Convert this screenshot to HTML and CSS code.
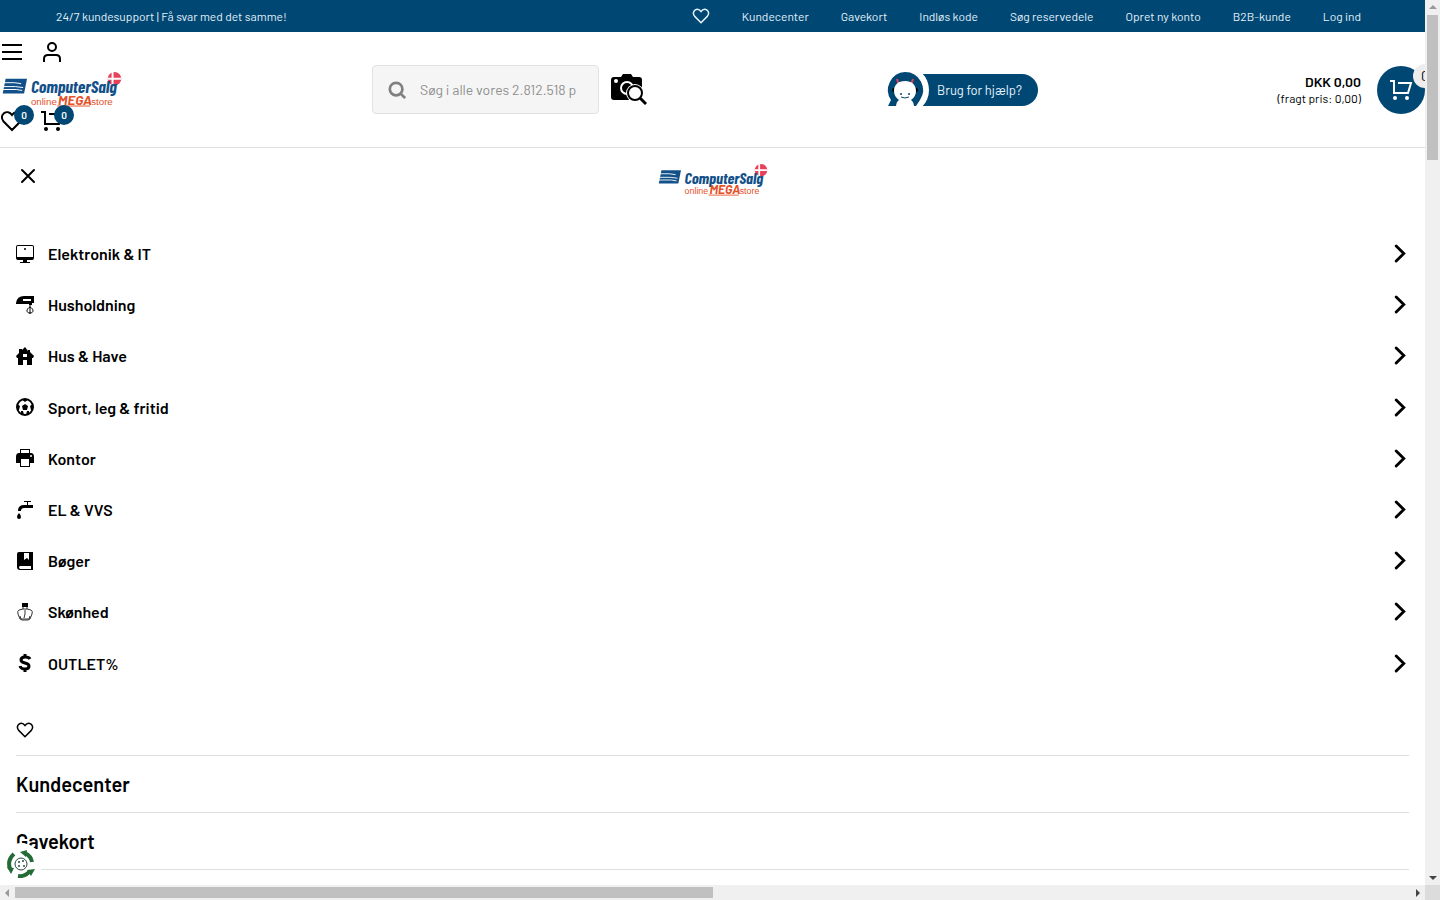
FILE: index.html
```
<!DOCTYPE html>
<html lang="da">
<head>
    <meta charset="UTF-8">
    <meta name="viewport" content="width=device-width, initial-scale=1.0">
    <title>ComputerSalg</title>
    <link rel="stylesheet" href="styles.css">
</head>
<body>
    <svg class="sprite" aria-hidden="true">
        <symbol id="logo" viewBox="0 0 122 36">
            <path d="M3 7h22l-3 15H0z" fill="#12508a"/>
            <path d="M0 11h12l7 1M0 15h13l8 1M0 18h14l6 1" fill="none" stroke="#fff"/>
            <circle cx="115" cy="7" r="7" fill="#e8415a"/>
            <path d="M113 0v14M108 7h14" stroke="#fff" stroke-width="2"/>
            <text x="29" y="22" class="logo-name">ComputerSalg</text>
            <text x="29" y="34" class="logo-sub">online</text>
            <text x="57" y="34" class="logo-mega">MEGA</text>
            <text x="91" y="34" class="logo-sub">store</text>
            <path d="M56 35h34" stroke="#e5522b"/>
        </symbol>
        <symbol id="heart" viewBox="0 0 24 24">
            <path d="M12 21 3.600 12.500C1 9.500 1.500 6 4 4.200 6.500 2.500 9.800 3 12 6c2.200-3 5.500-3.500 8-1.800 2.500 1.800 3 5.300.4 8.300z" fill="none" stroke="currentColor" stroke-width="2"/>
        </symbol>
        <symbol id="cart" viewBox="0 0 24 24">
            <path d="M1 3h4v12h14l3-10H9" fill="none" stroke="currentColor" stroke-width="2"/>
            <circle cx="6" cy="20" r="2" fill="currentColor"/>
            <circle cx="18" cy="20" r="2" fill="currentColor"/>
        </symbol>
        <symbol id="chevron" viewBox="0 0 12 20">
            <path d="m2 2 8 8-8 8" fill="none" stroke="currentColor" stroke-width="3" stroke-linecap="round"/>
        </symbol>
    </svg>

    <div class="window">
        <div class="page">
            <div class="topbar">
                <span>24/7 kundesupport | Få svar med det samme!</span>
                <nav class="topbar-nav">
                    <a href="#" aria-label="Favoritter"><svg class="icon-small"><use href="#heart"/></svg></a>
                    <a href="#">Kundecenter</a>
                    <a href="#">Gavekort</a>
                    <a href="#">Indløs kode</a>
                    <a href="#">Søg reservedele</a>
                    <a href="#">Opret ny konto</a>
                    <a href="#">B2B-kunde</a>
                    <a href="#">Log ind</a>
                </nav>
            </div>

            <header class="header">
                <div class="header-left">
                    <div class="icon-row">
                        <button aria-label="Menu">
                            <svg class="icon" viewBox="0 0 24 24"><path d="M2 5h20M2 12h20M2 19h20" stroke="currentColor" stroke-width="2"/></svg>
                        </button>
                        <button aria-label="Min konto">
                            <svg class="icon" viewBox="0 0 24 24" fill="none" stroke="currentColor" stroke-width="2"><circle cx="12" cy="7" r="4"/><path d="M4 22v-3c0-3 1-4 4-4h8c3 0 4 1 4 4v3"/></svg>
                        </button>
                    </div>
                    <a class="logo" href="#" aria-label="ComputerSalg"><svg><use href="#logo"/></svg></a>
                    <div class="icon-row icon-row-low">
                        <button aria-label="Favoritter"><svg class="icon"><use href="#heart"/></svg><span class="badge">0</span></button>
                        <button aria-label="Kurv"><svg class="icon"><use href="#cart"/></svg><span class="badge">0</span></button>
                    </div>
                </div>

                <form class="search">
                    <label class="search-box">
                        <svg viewBox="0 0 20 20" fill="none" stroke="currentColor" stroke-width="3"><circle cx="9" cy="9" r="7"/><path d="m14 14 5 5"/></svg>
                        <input type="text" aria-label="Søg" placeholder="Søg i alle vores 2.812.518 p">
                    </label>
                    <button type="button" class="camera" aria-label="Billedsøgning">
                        <svg viewBox="0 0 36 32">
                            <path d="M3 3h7l2-3h8l2 3h6q3 0 3 3v18q0 2-2 2H3q-3 0-3-3V6q0-3 3-3z"/>
                            <circle cx="5" cy="7" r="2" fill="#fff"/>
                            <circle cx="16" cy="14" r="6" fill="none" stroke="#fff" stroke-width="2"/>
                            <circle cx="24" cy="19" r="9" fill="#fff"/>
                            <circle cx="24" cy="19" r="7" fill="#fff" stroke="#000" stroke-width="2"/>
                            <path d="m29 24 6 6" stroke="#000" stroke-width="3"/>
                        </svg>
                    </button>
                </form>

                <div class="header-right">
                    <a class="help" href="#">
                        <svg class="mascot" viewBox="0 0 42 42">
                            <circle cx="18" cy="21" r="24" fill="#fff"/>
                            <path d="M18 3a18 18 0 0 1 15 28l-4 6H1l3-6A18 18 0 0 1 18 3z" fill="#004773"/>
                            <path d="m10 10 2 6M26 10l-2 6" stroke="#e8415a" stroke-width="2"/>
                            <circle cx="7" cy="21" r="2"/><circle cx="29" cy="21" r="2"/>
                            <path d="M18 12c7 0 11 4 11 10 0 4-2 7-5 9q3 2 3 7H9q0-5 3-7c-3-2-5-5-5-9 0-6 4-10 11-10z" fill="#fff"/>
                            <circle cx="14" cy="25" r="1" fill="#004773"/><circle cx="22" cy="25" r="1" fill="#004773"/>
                            <path d="M14 28q4 2 8 0" fill="none" stroke="#004773"/>
                        </svg>
                        <span>Brug for hjælp?</span>
                    </a>
                    <div class="total">
                        <strong>DKK 0,00</strong>
                        <span>(fragt pris: 0,00)</span>
                    </div>
                    <a class="basket" href="#" aria-label="Kurv"><svg class="icon"><use href="#cart"/></svg><span class="basket-count">0</span></a>
                </div>
            </header>

            <div class="menu-head">
                <button class="close" aria-label="Luk">
                    <svg class="icon" viewBox="0 0 24 24"><path d="m6 6 12 12M18 6 6 18" stroke="currentColor" stroke-width="2"/></svg>
                </button>
                <a class="logo logo-small" href="#" aria-label="ComputerSalg"><svg><use href="#logo"/></svg></a>
            </div>

            <nav class="categories">
                <a href="#">
                    <svg class="icon-small" viewBox="0 0 18 18"><path d="M2 0h14q2 0 2 2v11q0 2-2 2h-5v2h3v1H4v-1h3v-2H2q-2 0-2-2V2q0-2 2-2zm0 1q-1 0-1 1v10h16V2q0-1-1-1z" fill-rule="evenodd"/><circle cx="9" cy="4" r="1"/></svg>
                    <span>Elektronik &amp; IT</span>
                    <svg class="arrow"><use href="#chevron"/></svg>
                </a>
                <a href="#">
                    <svg class="icon-small" viewBox="0 0 18 18"><path d="M0 7q1-7 8-7h10v7h-2v2h-3V8H0zm7-4v2h8V3z" fill-rule="evenodd"/><path d="M14 8v10M14 11c-4 2-4 6 0 6s4-4 0-6z" fill="none" stroke="#000"/></svg>
                    <span>Husholdning</span>
                    <svg class="arrow"><use href="#chevron"/></svg>
                </a>
                <a href="#">
                    <svg class="icon-small" viewBox="0 0 18 18"><path d="M9 0 6 3V2H3v4L0 9l1 2h1v7h5v-5h4v5h5v-7h1l1-2-4-4V3h-2v1zM7 7h4v3H7z" fill-rule="evenodd"/></svg>
                    <span>Hus &amp; Have</span>
                    <svg class="arrow"><use href="#chevron"/></svg>
                </a>
                <a href="#">
                    <svg class="icon-small" viewBox="0 0 18 18"><circle cx="9" cy="9" r="8" fill="none" stroke="#000" stroke-width="2"/><path d="m9 6 3 2-1 4H7L6 8zM5 1l4 3 4-3zM1 6l3 2-1 4-2 1zM17 6l-3 2 1 4 2 1zM5 13h2l1 4-3-1zM13 13h-2l-1 4 3-1z"/></svg>
                    <span>Sport, leg &amp; fritid</span>
                    <svg class="arrow"><use href="#chevron"/></svg>
                </a>
                <a href="#">
                    <svg class="icon-small" viewBox="0 0 18 18"><path d="M4 0h10v4H4zM3 4h12q3 0 3 4v6h-4V9H4v5H0V8q0-4 3-4z"/><path d="M5 1h8v3H5z" fill="#fff"/><path d="M4 9h10v9H4z"/><path d="M5 10h8v7H5z" fill="#fff"/><circle cx="15" cy="7" r="1" fill="#fff"/></svg>
                    <span>Kontor</span>
                    <svg class="arrow"><use href="#chevron"/></svg>
                </a>
                <a href="#">
                    <svg class="icon-small" viewBox="0 0 18 18"><path d="M8 0h7v1h-3v3h5v3H8q-3 0-3 3H2q0-6 6-6h3V1H8zM3 12q2 2 2 4a2 2 0 0 1-4 0q0-2 2-4z"/></svg>
                    <span>EL &amp; VVS</span>
                    <svg class="arrow"><use href="#chevron"/></svg>
                </a>
                <a href="#">
                    <svg class="icon-small" viewBox="0 0 18 18"><path d="M3 0h14v18H4q-3 0-3-3V2q0-2 2-2zm5 1v7l3-2 2 2V1zM4 14q-2 1 0 3h11v-3z" fill-rule="evenodd"/></svg>
                    <span>Bøger</span>
                    <svg class="arrow"><use href="#chevron"/></svg>
                </a>
                <a href="#">
                    <svg class="icon-small" viewBox="0 0 18 18"><path d="M6 0h6v4H6z"/><path d="M7 4v2L3 7q-2 1-1 4l2 5 2 1h6l2-1 2-5q1-3-1-4l-4-1V4M7 6h4M9 7v4l-1 4M4 13l1 3h8l1-3" fill="none" stroke="#333"/></svg>
                    <span>Skønhed</span>
                    <svg class="arrow"><use href="#chevron"/></svg>
                </a>
                <a href="#">
                    <svg class="icon-small" viewBox="0 0 18 18"><path d="M14 5q-1-2-5-2-4 0-4 3c0 4 8 2 8 6 0 4-8 4-9 0M9 0v3M9 15v3" fill="none" stroke="#000" stroke-width="3"/></svg>
                    <span>OUTLET%</span>
                    <svg class="arrow"><use href="#chevron"/></svg>
                </a>
            </nav>

            <nav class="account-links">
                <a class="favourites" href="#" aria-label="Favoritter"><svg class="icon-small"><use href="#heart"/></svg></a>
                <a href="#">Kundecenter</a>
                <a href="#">Gavekort</a>
            </nav>

            <button class="cookie" aria-label="Cookieindstillinger">
                <svg viewBox="0 0 28 28">
                    <g fill="none" stroke="#246b38" stroke-width="4">
                        <path d="M18 3q6 3 7 9M23 21q-5 6-12 5M3 19Q0 10 7 4"/>
                    </g>
                    <path d="m13 2 7-2-1 7zM20 20l8-1-4 7zM0 17l7 1-3 6z" fill="#246b38"/>
                    <circle cx="14" cy="14" r="6" fill="none" stroke="#234c3b"/>
                    <g fill="#234c3b"><circle cx="12" cy="12" r="1"/><circle cx="16" cy="11" r="1"/><circle cx="17" cy="16" r="1"/><circle cx="12" cy="16" r="1"/></g>
                </svg>
            </button>
        </div>

        <div class="scroll scroll-y">
            <svg viewBox="0 0 15 15"><path d="m4 9 4-4 4 4z" fill="#999"/></svg>
            <div class="track"><div class="thumb"></div></div>
            <svg viewBox="0 0 15 15"><path d="m4 6 4 4 4-4z" fill="#444"/></svg>
        </div>
        <div class="scroll scroll-x">
            <svg viewBox="0 0 15 15"><path d="M9 4 5 8l4 4z" fill="#999"/></svg>
            <div class="track"><div class="thumb"></div></div>
            <svg viewBox="0 0 15 15"><path d="m6 4 4 4-4 4z" fill="#444"/></svg>
        </div>
        <div class="corner"></div>
    </div>
</body>
</html>
```
FILE: styles.css
```
* {
    box-sizing: border-box;
}

body {
    margin: 0;
    font-family: Barlow, Roboto, sans-serif;
    color: #000;
    background-color: #fff;
}

a {
    color: inherit;
    text-decoration: none;
}

button {
    display: flex;
    padding: 0;
    border: none;
    background: none;
    color: inherit;
    font-family: inherit;
    cursor: pointer;
}

svg {
    display: block;
}

.sprite {
    position: absolute;
    width: 0;
    height: 0;
}

.icon {
    width: 24px;
    height: 24px;
}

.icon-small {
    width: 18px;
    height: 18px;
}

.window {
    display: grid;
    grid-template-columns: minmax(0, 1fr) 15px;
    grid-template-rows: minmax(0, 1fr) 15px;
    height: 100vh;
}

.page {
    position: relative;
    overflow: hidden;
}

/* top bar */
.topbar {
    display: flex;
    align-items: center;
    justify-content: space-between;
    height: 32px;
    padding: 0 64px 0 56px;
    background-color: #004773;
    color: #e4f1fa;
    font-size: 12px;
    white-space: nowrap;
}

.topbar-nav {
    display: flex;
    align-items: center;
    gap: 32px;
}

/* header */
.header {
    display: grid;
    grid-template-columns: 372fr 515fr 538fr;
    align-items: center;
    border-bottom: 1px solid #e0e0e0;
}

.header-left {
    padding-bottom: 12px;
}

.icon-row {
    display: flex;
    align-items: center;
    gap: 16px;
    height: 40px;
}

.icon-row-low {
    height: 28px;
}

.icon-row button {
    position: relative;
}

.logo svg {
    width: 122px;
    height: 35px;
}

.logo-small svg {
    width: 110px;
    height: 32px;
}

.header .logo {
    display: block;
    padding-left: 1px;
}

.logo-name {
    font: italic bold 18px "Barlow Condensed", Barlow, "Liberation Sans", sans-serif;
    fill: #12508a;
}

.logo-sub {
    font: 10px "Liberation Sans", sans-serif;
    fill: #e5522b;
}

.logo-mega {
    font: italic bold 14px Barlow, "Liberation Sans", sans-serif;
    fill: #e5522b;
}

.badge {
    position: absolute;
    top: -4px;
    left: 14px;
    width: 20px;
    border-radius: 10px;
    background-color: #004773;
    color: #fff;
    font-size: 10px;
    font-weight: 600;
    line-height: 20px;
}

.search {
    display: flex;
    align-items: center;
    gap: 12px;
}

.search-box {
    display: flex;
    align-items: center;
    gap: 14px;
    width: 227px;
    height: 49px;
    padding: 0 16px 0 15px;
    border: 1px solid #e2e2e2;
    border-radius: 4px;
    background-color: #f5f5f5;
    color: #808080;
}

.search-box svg {
    flex: none;
    width: 18px;
    height: 18px;
}

.search-box input {
    width: 100%;
    min-width: 0;
    padding: 0;
    border: none;
    outline: none;
    background: none;
    font-family: inherit;
    font-size: 14px;
}

.search-box input::placeholder {
    color: #909090;
}

.camera svg {
    width: 36px;
    height: 32px;
}

.header-right {
    display: flex;
    align-items: center;
}

.help {
    display: flex;
    align-items: center;
    height: 32px;
    padding-right: 16px;
    border-radius: 16px;
    background-color: #004773;
    color: #e4f1fa;
    font-size: 13px;
}

.mascot {
    width: 42px;
    height: 42px;
    margin-right: 8px;
    overflow: visible;
}

.total {
    display: flex;
    flex-direction: column;
    align-items: flex-end;
    margin: 0 16px 0 auto;
    font-size: 12px;
    line-height: 16px;
}

.total strong {
    font-size: 14px;
    font-weight: 600;
}

.basket {
    position: relative;
    padding: 12px;
    border-radius: 50%;
    background-color: #004773;
    color: #fff;
}

.basket-count {
    position: absolute;
    top: -2px;
    right: -12px;
    width: 24px;
    border-radius: 50%;
    background-color: #ededed;
    color: #000;
    font-size: 14px;
    line-height: 24px;
    text-align: center;
}

/* menu */
.menu-head {
    display: grid;
    grid-template-columns: 1fr auto 1fr;
    padding: 16px 16px 32px;
}

.close {
    align-self: start;
    justify-self: start;
}

.close svg {
    stroke-linecap: round;
}

.categories a {
    display: flex;
    align-items: center;
    padding: 16px 19px 16px 16px;
    font-size: 16px;
    font-weight: 600;
    line-height: 1.2;
}

.categories span {
    flex: 1;
    padding-left: 14px;
}

.arrow {
    width: 12px;
    height: 19px;
}

.account-links {
    padding: 24px 16px 0;
}

.account-links a {
    display: block;
    padding: 16px 0;
    border-bottom: 1px solid #dedede;
    font-size: 20px;
    font-weight: 600;
    line-height: 24px;
}

.account-links .favourites {
    padding: 8px 0 16px;
}

.cookie {
    position: absolute;
    bottom: 0;
    left: 0;
    padding: 7px;
    border-radius: 50%;
    background-color: #fff;
}

.cookie svg {
    width: 28px;
    height: 28px;
}

/* scrollbars */
.scroll {
    display: flex;
    background-color: #f0f0f0;
}

.scroll svg {
    flex: none;
    width: 15px;
    height: 15px;
}

.scroll-y {
    flex-direction: column;
}

.track {
    flex: 1;
}

.thumb {
    background-color: #c0c0c0;
}

.scroll-y .thumb {
    height: 17%;
    margin: 0 2px;
}

.scroll-x .track {
    padding: 2px 0;
}

.scroll-x .thumb {
    width: 50%;
    height: 100%;
}

.corner {
    background-color: #dcdcdc;
}
```
